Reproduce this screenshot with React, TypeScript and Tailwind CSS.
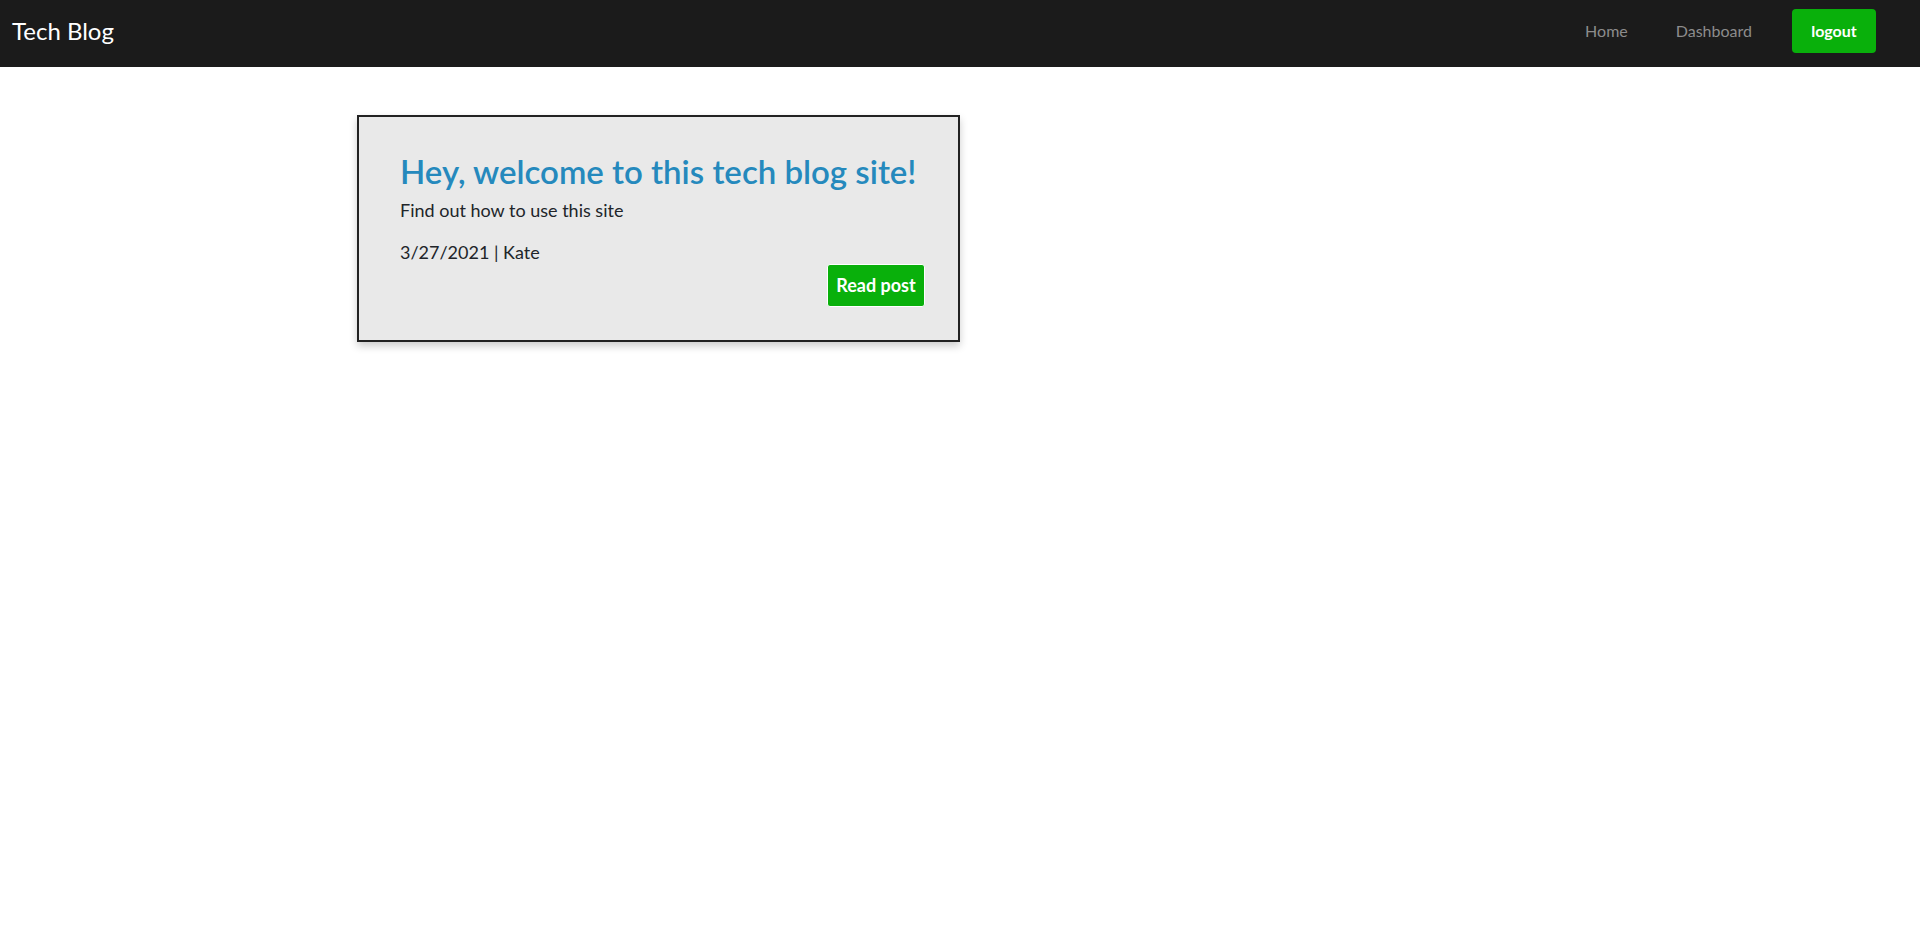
export default function App() {
    const font = { fontFamily: 'Lato, "Noto Sans", sans-serif' };

    return (
        <div className="min-h-screen bg-white text-[#212529]" style={font}>
            <nav className="flex h-[67px] items-center justify-between bg-[#1b1b1b] pr-[44px] pb-[5px] pl-[12px]">
                <a className="text-[24px] text-white">Tech Blog</a>
                <div className="flex items-center">
                    <a className="text-[16px] text-[#8c8c8c]">Home</a>
                    <a className="ml-[48px] text-[16px] text-[#8c8c8c]">Dashboard</a>
                    <button className="ml-[40px] h-[44px] w-[84px] rounded-[4px] bg-[#09b00b] text-[16px] font-bold text-white">logout</button>
                </div>
            </nav>

            <main className="pt-[48px] pl-[357px]">
                <article className="flex h-[227px] w-[603px] flex-col border-2 border-[#222] bg-[#e9e9e9] pt-[34px] pr-[33px] pl-[41px] shadow-[0_4px_8px_rgba(0,0,0,0.2)]">
                    <h2 className="text-[33px] leading-[41px] font-semibold text-[#2589bd]">Hey, welcome to this tech blog site!</h2>
                    <p className="mt-[6px] text-[18px] leading-[24px]">Find out how to use this site</p>
                    <p className="mt-[18px] text-[18px] leading-[24px]">3/27/2021 | Kate</p>
                    <div className="flex justify-end">
                        <button className="h-[43px] w-[98px] rounded-[3px] border border-white bg-[#09b00b] text-[18px] font-bold text-white">Read post</button>
                    </div>
                </article>
            </main>
        </div>
    );
}
